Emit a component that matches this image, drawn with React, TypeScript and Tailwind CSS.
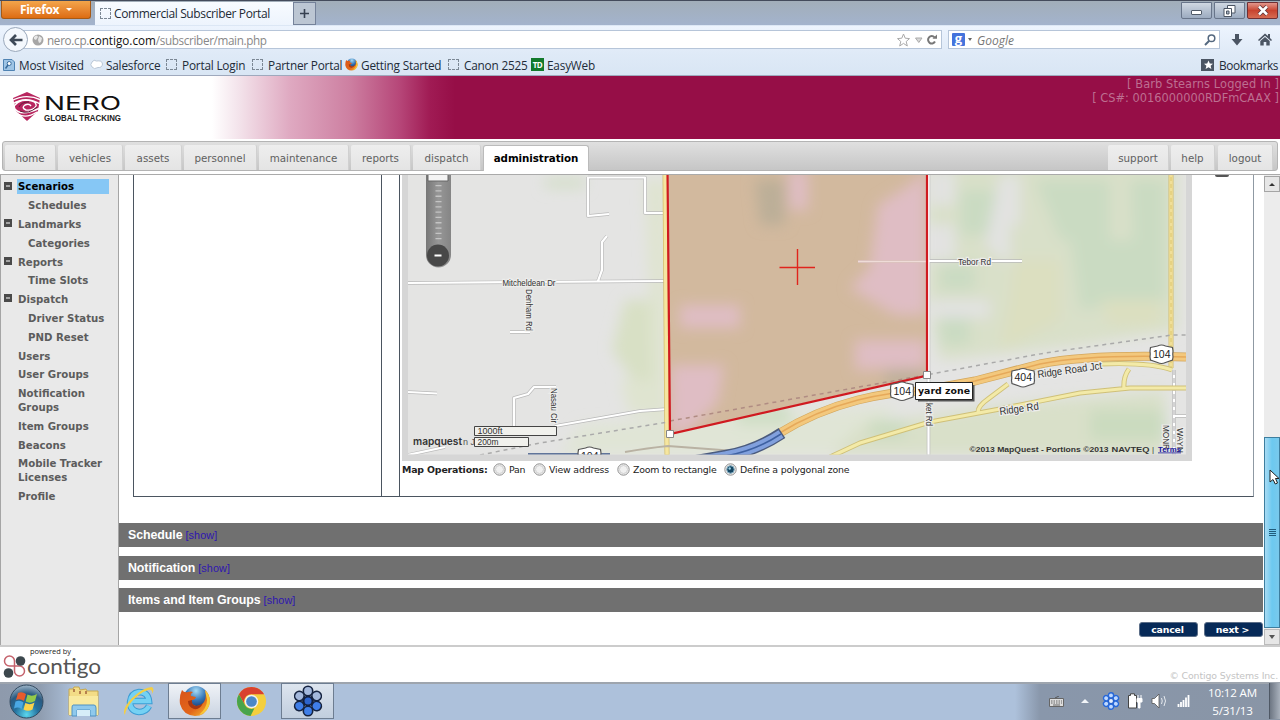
import { ReactNode } from "react";

const SEGOE = "font-['Open_Sans','Noto_Sans',sans-serif]";
const VERDANA = "font-['DejaVu_Sans',sans-serif]";

const leftTabs = [
  { label: "home", box: "ml-[2px] w-[51px]" },
  { label: "vehicles", box: "ml-[2px] w-[65px]" },
  { label: "assets", box: "ml-[2px] w-[57px]" },
  { label: "personnel", box: "ml-[2px] w-[73px]" },
  { label: "maintenance", box: "ml-[2px] w-[90px]" },
  { label: "reports", box: "ml-[2px] w-[60px]" },
  { label: "dispatch", box: "ml-[2px] w-[68px]" },
];

const rightTabs = [
  { label: "support", box: "w-[61px]" },
  { label: "help", box: "ml-[2px] w-[44px]" },
  { label: "logout", box: "ml-[3px] w-[55px]" },
];

const sideItems = [
  { label: "Scenarios", toggle: true, active: true },
  { label: "Schedules", child: true },
  { label: "Landmarks", toggle: true },
  { label: "Categories", child: true },
  { label: "Reports", toggle: true },
  { label: "Time Slots", child: true },
  { label: "Dispatch", toggle: true },
  { label: "Driver Status", child: true },
  { label: "PND Reset", child: true },
  { label: "Users" },
  { label: "User Groups" },
  { label: "Notification Groups" },
  { label: "Item Groups" },
  { label: "Beacons" },
  { label: "Mobile Tracker Licenses" },
  { label: "Profile" },
];

function BlankPage() {
  return <span className="h-[11px] w-[11px] shrink-0 border border-dashed border-[#7b8794]" />;
}

function FirefoxIcon({ size }: { size: number }) {
  return (
    <svg width={size} height={size} viewBox="0 0 32 32" className="shrink-0">
      <defs>
        <radialGradient id="globe" cx="0.5" cy="0.2" r="0.8">
          <stop offset="0" stopColor="#a8dcf5" />
          <stop offset="0.5" stopColor="#3576b8" />
          <stop offset="1" stopColor="#12295c" />
        </radialGradient>
        <linearGradient id="fox" x1="0" y1="0" x2="1" y2="1">
          <stop offset="0" stopColor="#d9541a" />
          <stop offset="0.6" stopColor="#e2661a" />
          <stop offset="1" stopColor="#f9c432" />
        </linearGradient>
      </defs>
      <circle cx="17" cy="13" r="12" fill="url(#globe)" />
      <path
        d="M3 5 Q5 8 9 7 Q12 6 14 7 Q11 9 12 11 L17 12 Q16 15 13 15 Q12 20 17 21 Q22 21 25 17 Q28 12 26 5 Q33 12 30 21 Q26 31 16 31 Q4 30 1 19 Q0 11 3 5Z"
        fill="url(#fox)"
      />
      <path d="M26 5 Q33 12 30 21 Q27 28 20 30 Q28 23 28 15Z" fill="#f8c838" />
      <path d="M13 15 Q12 20 17 21 Q21 21 24 18 Q21 25 15 24 Q9 22 9 16Z" fill="#a83711" />
    </svg>
  );
}

function TabStrip() {
  return (
    <div className="flex h-[25px] shrink-0 border-t border-[#444b5b] bg-gradient-to-b from-[#a2aeb9] to-[#a3b3cd]">
      <div className="ml-px flex h-[18px] w-[90px] items-center justify-center rounded-b-[3px] border border-t-0 border-[#a65a16] bg-gradient-to-b from-[#f3a54a] to-[#dd6c10] text-[12px] font-bold text-white">
        <span className="tracking-[-0.4px]">Firefox</span>
        <span className="ml-[7px] border-x-[3px] border-t-[3px] border-x-transparent border-t-white" />
      </div>
      <div className="ml-[4px] mt-px flex w-[198px] items-center bg-gradient-to-b from-[#f8fbff] to-[#edf4fd] pl-[5px] text-[#222a35]">
        <BlankPage />
        <span className="ml-[3px] whitespace-nowrap pt-px text-[12px] tracking-[-0.37px]">Commercial Subscriber Portal</span>
      </div>
      <div className="mt-px flex w-[23px] items-center justify-center border border-[#75829a] bg-[#bcc6d3]">
        <svg width="9" height="9" viewBox="0 0 9 9">
          <path d="M4.5 0V9M0 4.5H9" stroke="#374151" strokeWidth="1.6" />
        </svg>
      </div>
      <div className="ml-auto mr-[2px] mt-px flex h-[17px] gap-[2px]">
        <div className="flex w-[31px] items-center justify-center rounded-b-[2px] border border-[#68758a] bg-gradient-to-b from-[#d0d8e2] to-[#9cabc0]">
          <span className="mt-[4px] h-[5px] w-[11px] rounded-[1px] border border-[#505a68] bg-white" />
        </div>
        <div className="flex w-[31px] items-center justify-center rounded-b-[2px] border border-[#68758a] bg-gradient-to-b from-[#d0d8e2] to-[#9cabc0]">
          <svg width="13" height="12" viewBox="0 0 13 12">
            <path d="M4.5 .5H12V8H4.5Z" fill="#fff" stroke="#4b5563" />
            <path d="M1 3.5H8.5V11.5H1Z" fill="#fff" stroke="#4b5563" />
            <path d="M3.5 6H6V9H3.5Z" fill="#a9b5c5" stroke="#4b5563" />
          </svg>
        </div>
        <div className="flex w-[31px] items-center justify-center rounded-b-[2px] border border-[#702f33] bg-gradient-to-b from-[#e2958b] via-[#c8432f] to-[#d66a51]">
          <svg width="12" height="11" viewBox="0 0 12 11">
            <path d="M2 1.5L10 9.5M10 1.5L2 9.5" stroke="#5d3238" strokeWidth="4" />
            <path d="M2 1.5L10 9.5M10 1.5L2 9.5" stroke="#fff" strokeWidth="2.5" />
          </svg>
        </div>
      </div>
    </div>
  );
}

function NavBar() {
  return (
    <div className="flex h-[28px] shrink-0 items-center border-t border-[#dce7f5] bg-gradient-to-b from-[#edf4fe] to-[#dfeaf7]">
      <div className="z-10 ml-[3px] mr-[-13px] flex h-[25px] w-[25px] shrink-0 items-center justify-center rounded-full border border-[#9aa8bb] bg-[#f4f8fd]">
        <svg width="14" height="12" viewBox="0 0 14 12">
          <path d="M7 1L2 6L7 11M2.5 6H13.5" fill="none" stroke="#3f4a58" strokeWidth="2.7" />
        </svg>
      </div>
      <div className="flex h-[19px] w-[927px] items-center border border-[#b6c5d9] bg-white pl-[16px] text-[12px] text-[#888]">
        <svg width="12" height="12" viewBox="0 0 12 12">
          <circle cx="6" cy="6" r="5.5" fill="#a6a6a6" />
          <path d="M2 3Q5 0 6 3L4 6L2 5ZM7 2L10 4L9 8L7 9L6 6Z" fill="#e7e7e7" />
        </svg>
        <span className="ml-[3px] whitespace-nowrap pt-[2px] text-[11.7px]">
          <span className="tracking-[-0.3px]">nero.cp.</span>
          <span className="tracking-[0] text-[#111]">contigo.com</span>
          <span className="tracking-[-0.35px]">/subscriber/main.php</span>
        </span>
        <svg className="ml-auto mr-[2px]" width="44" height="14" viewBox="0 0 44 14">
          <path
            d="M7 1L8.7 5.2L13 5.6L9.7 8.5L10.8 13L7 10.4L3.2 13L4.3 8.5L1 5.6L5.3 5.2Z"
            transform="translate(1.5 0)"
            fill="#fff"
            stroke="#aaa"
          />
          <path d="M20.5 5H27L23.8 9.5Z" fill="#d8d8d8" stroke="#aaa" />
          <path d="M39.5 4.3A3.7 3.7 0 1 0 40 8.6" fill="none" stroke="#777" strokeWidth="2" />
          <path d="M37.5 5.8H42V1.5Z" fill="#777" />
        </svg>
      </div>
      <div className="ml-[6px] flex h-[19px] w-[272px] items-center border border-[#b6c5d9] bg-white pl-[3px]">
        <span className="flex h-[13px] w-[13px] items-center justify-center rounded-[1px] bg-[#4473dc] text-[13px] font-bold leading-none text-white">
          <span className="-mt-[3px]">g</span>
        </span>
        <span className="ml-[3px] border-x-[2.5px] border-t-[3px] border-x-transparent border-t-[#666]" />
        <span className="ml-[5px] pt-[2px] text-[12px] italic text-[#777]">Google</span>
        <svg className="ml-auto mr-[3px]" width="12" height="12" viewBox="0 0 12 12">
          <circle cx="7.5" cy="4.3" r="3.3" fill="none" stroke="#54687f" strokeWidth="1.5" />
          <path d="M5 7L1 11" stroke="#54687f" strokeWidth="2" />
        </svg>
      </div>
      <svg className="ml-[11px]" width="12" height="12" viewBox="0 0 12 12">
        <path d="M4 0H8V5H11.5L6 11.5L.5 5H4Z" fill="#4b5563" />
      </svg>
      <svg className="ml-[15px]" width="14" height="13" viewBox="0 0 14 13">
        <path d="M0 7L7 .5L10 3V1H12V5L14 7L13 8L7 2.7L1 8Z" fill="#4b5563" />
        <path d="M2.3 8L7 4L11.7 8V12.5H8.3V9H5.7V12.5H2.3Z" fill="#4b5563" />
      </svg>
    </div>
  );
}

function Bookmark({ icon, label, box }: { icon: ReactNode; label: string; box: string }) {
  return (
    <div className={`flex shrink-0 items-center whitespace-nowrap ${box}`}>
      <span className="flex w-[16px] shrink-0">{icon}</span>
      <span className="pt-[2px]">{label}</span>
    </div>
  );
}

function BookmarksBar() {
  return (
    <div className="flex h-[23px] shrink-0 items-center border-b border-[#9fa9bd] bg-gradient-to-b from-[#dfeaf7] to-[#d9e6f4] pl-[3px] pt-px text-[11.8px] tracking-[-0.2px] text-[#222b38]">
      <Bookmark
        box="w-[87px]"
        label="Most Visited"
        icon={
          <svg width="12" height="13" viewBox="0 0 12 13">
            <path d="M.5 1.5H9L11.5 4V12.5H.5Z" fill="#9ec4e5" stroke="#4f83b3" />
            <circle cx="6.2" cy="5.5" r="2" fill="#fff" stroke="#386b9c" />
            <path d="M5 7L2.5 10.5" stroke="#386b9c" strokeWidth="1.5" />
          </svg>
        }
      />
      <Bookmark
        box="w-[76px]"
        label="Salesforce"
        icon={
          <svg width="13" height="11" viewBox="0 0 13 11">
            <path d="M2 3Q4 0 6.5 2Q12 1 12.5 5Q12 9 8 8.5Q4 11 2 8Q-.5 6 2 3Z" fill="#fff" stroke="#b8c6d6" />
          </svg>
        }
      />
      <Bookmark box="w-[86px]" label="Portal Login" icon={<BlankPage />} />
      <Bookmark box="w-[93px]" label="Partner Portal" icon={<BlankPage />} />
      <Bookmark box="w-[103px]" label="Getting Started" icon={<FirefoxIcon size={13} />} />
      <Bookmark box="w-[83px]" label="Canon 2525" icon={<BlankPage />} />
      <Bookmark
        box="w-[80px]"
        label="EasyWeb"
        icon={
          <span className="flex h-[13px] w-[13px] items-center justify-center bg-[#127a2c] text-[8px] font-bold tracking-[-0.5px] text-white">
            TD
          </span>
        }
      />
      <div className="ml-auto mr-[2px] flex items-center whitespace-nowrap">
        <svg className="mr-[5px]" width="13" height="12" viewBox="0 0 13 12">
          <path d="M0 0H13V12H0Z" fill="#4b5563" />
          <path d="M7.5 1.5L8.8 4.5L12 4.8L9.6 6.8L10.4 10L7.5 8.3L4.6 10L5.4 6.8L3 4.8L6.2 4.5Z" fill="#fff" />
        </svg>
        <span className="pt-[2px] tracking-[-0.35px]">Bookmarks</span>
      </div>
    </div>
  );
}

function NeroLogo() {
  return (
    <div className="flex items-start pl-[12px] pt-[16px]">
      <svg width="30" height="30" viewBox="0 0 30 30">
        <path d="M1 6L15 0L28 6L26 19L15 29L4 19Z" fill="#b8265f" />
        <path
          d="M0 8.5Q14 1 29 8M0 12.5Q13 3 29 12.5M1 17Q4 8 15 8Q25 9 24 14Q21 19 14 18Q9 16 13 13Q17 11 19 14M3 17Q9 25 28 16M6 22Q14 27 25 20"
          fill="none"
          stroke="#fff"
          strokeWidth="1.4"
        />
        <path d="M7 15Q9 10 17 10M8 19Q16 23 25 15" fill="none" stroke="#5f1d3a" />
      </svg>
      <svg width="84" height="36" viewBox="0 0 84 36" className="ml-[1px] overflow-visible">
        <text x="1" y="17.5" fontFamily="Inter, sans-serif" fontSize="19" fill="#111" textLength="77" lengthAdjust="spacingAndGlyphs">
          NERO
        </text>
        <text
          x="1"
          y="28.5"
          fontFamily="Liberation Sans, sans-serif"
          fontSize="8.6"
          fontWeight="bold"
          fill="#222"
          textLength="77"
          lengthAdjust="spacingAndGlyphs"
        >
          GLOBAL TRACKING
        </text>
      </svg>
    </div>
  );
}

function Header() {
  return (
    <div
      className={`flex h-[63px] shrink-0 justify-between bg-[linear-gradient(90deg,#fff_0,#fff_212px,#f3e2ea_240px,#dfa9c1_290px,#cd7fa1_350px,#b64678_400px,#a01b54_430px,#960e47_455px)] ${VERDANA}`}
    >
      <NeroLogo />
      <div className="pr-[1px] pt-px text-right text-[11.4px] leading-[14px] text-[#bd6f91]">
        <p className="tracking-[0.1px]">[ Barb Stearns Logged In ]</p>
        <p>[ CS#: 0016000000RDFmCAAX ]</p>
      </div>
    </div>
  );
}

function MenuBar() {
  const tab =
    "flex items-center justify-center bg-gradient-to-b from-[#eee] to-[#e4e4e4] border-r border-[#d0d0d0] rounded-t-[2px] pt-[3px]";
  return (
    <div className="h-[36px] shrink-0 border-b border-[#aaa] bg-white pt-[2px]">
      <div
        className={`ml-[2px] flex h-[30px] w-[1276px] rounded-[3px] border border-[#b4b4b4] bg-gradient-to-b from-[#e0e0e0] to-[#c6c6c6] pt-[3px] text-[10.3px] text-[#606060] ${VERDANA}`}
      >
        {leftTabs.map((t) => (
          <div key={t.label} className={`${tab} ${t.box}`}>
            {t.label}
          </div>
        ))}
        <div className="ml-[2px] mb-[-1px] flex w-[106px] items-center justify-center rounded-t-[3px] border border-b-0 border-[#bbb] bg-white pt-px font-bold text-black">
          <span className="tracking-[-0.05px]">administration</span>
        </div>
        <div className="ml-auto mr-[4px] flex">
          {rightTabs.map((t) => (
            <div key={t.label} className={`${tab} ${t.box}`}>
              {t.label}
            </div>
          ))}
        </div>
      </div>
    </div>
  );
}

function Sidebar() {
  return (
    <div
      className={`w-[119px] shrink-0 border-l border-r border-[#a5a5a5] bg-[#e9e9e9] pt-[3px] text-[10.2px] font-bold leading-[13.8px] text-[#5c5c5c] ${VERDANA}`}
    >
      {sideItems.map((item) => (
        <div key={item.label} className="flex py-[2.5px] pl-[3px]">
          <span className="w-[13px] shrink-0 pt-px">
            {item.toggle && (
              <svg width="8" height="8" viewBox="0 0 8 8" className="block">
                <path d="M0 0H8V8H0Z" fill="#4a4a4a" />
                <path d="M2 4H6" stroke="#fff" />
              </svg>
            )}
          </span>
          <span
            className={
              item.active
                ? "-mt-[2px] w-[92px] bg-[#86c7f5] pb-px pl-[1px] pt-px text-black"
                : item.child
                  ? "whitespace-nowrap pl-[11px]"
                  : "w-[92px] pl-[1px]"
            }
          >
            {item.label}
          </span>
        </div>
      ))}
    </div>
  );
}

function Shield({ x, y, label }: { x: number; y: number; label: string }) {
  return (
    <g transform={`translate(${x} ${y})`}>
      <path
        d="M-11 -6.5L-4 -8Q0 -10 4 -8L11 -6.5L11.5 -3Q11 0 11.5 3L11 6L4 8.5Q0 10.5 -4 8.5L-11 6L-11.5 3Q-11 0 -11.5 -3Z"
        fill="#fff"
        stroke="#555"
        strokeWidth="1.2"
      />
      <text x="-8.5" y="3.8" fontSize="10.5" textLength="17.5" lengthAdjust="spacingAndGlyphs" fill="#222">
        {label}
      </text>
    </g>
  );
}

const halo = {
  stroke: "#ededeb",
  strokeWidth: 2.5,
  paintOrder: "stroke" as const,
  lengthAdjust: "spacingAndGlyphs" as const,
};

// drawn in page units, so the viewBox starts where the map panel does
function MapView() {
  return (
    <svg width="790" height="286" viewBox="402 175 790 286" className="block" fontFamily="Liberation Sans, Arial, sans-serif">
      <defs>
        <filter id="soft" x="-30%" y="-30%" width="160%" height="160%">
          <feGaussianBlur stdDeviation="7" />
        </filter>
        <clipPath id="tile">
          <path d="M408 175H1186V454.5H408Z" />
        </clipPath>
        <clipPath id="zone">
          <path d="M667 170L670 434L926 375V170Z" />
        </clipPath>
        <linearGradient id="slider" x1="0" x2="1">
          <stop offset="0" stopColor="#777" />
          <stop offset="0.5" stopColor="#979797" />
          <stop offset="1" stopColor="#858585" />
        </linearGradient>
      </defs>
      <path d="M402 175H1192V461H402Z" fill="#d6d6d6" />
      <g clipPath="url(#tile)">
        <path d="M408 175H1186V455H408Z" fill="#e4e4e3" />
        <g filter="url(#soft)">
          <path d="M927 160H1178V330L1080 345L1020 352L940 360L927 300Z" fill="#d9e0c9" />
          <path d="M960 190H995V235H960ZM1035 180H1110V240H1060ZM1070 240H1150V300L1080 310ZM940 265H975V290H940ZM1130 180H1165V300H1135ZM940 318H970V345H940Z" fill="#cadbc2" />
          <path d="M1015 260H1060V320L1000 350L1010 300ZM1100 300H1160V325H1110Z" fill="#dcdfc0" />
          <path d="M930 170H955V205H930ZM1000 175H1020V225H1010V265L985 245ZM927 225H955V260H927ZM930 300H990V318H930Z" fill="#e2e2e1" />
          <path d="M625 300H665V405L640 390L612 350Z" fill="#d8e0c5" />
          <path d="M645 180H667V440H655ZM620 380H660V415H630Z" fill="#dfe4d0" />
          <path d="M545 178H585V188H545Z" fill="#d3dec7" />
          <path d="M580 425L900 405L840 455H560Z" fill="#e0e5d6" />
          <path d="M730 405H790V425H740Z" fill="#cfdec5" />
          <path d="M860 425L1000 405L1165 390V455H830Z" fill="#d9e0c9" />
          <path d="M1090 410H1165V440H1090ZM870 420H905V438H870Z" fill="#cbdbbf" />
        </g>
        <g fill="none" strokeLinejoin="round">
          <g stroke="#b9b9b9" strokeWidth="3.5">
            <path d="M408 283L666 281M588 177.500H645V213H666M588 177V216L609 214M598 281L602 270V242L607 236M510 332H530M408 392L437 393.500M514 430V398L528 394L534 387H556M555 426L640 411L668 409M408 455L445 447" />
            <path d="M928.500 175V455M928 261H1022M1174 416H1186M1174 370V455" />
          </g>
          <g stroke="#fff" strokeWidth="2.2">
            <path d="M408 283L666 281M588 177.500H645V213H666M588 177V216L609 214M598 281L602 270V242L607 236M510 332H530M408 392L437 393.500M514 430V398L528 394L534 387H556M555 426L640 411L668 409M408 455L445 447" />
            <path d="M928.500 175V455M928 261H1022M1174 416H1186M1174 370V455" />
          </g>
          <path d="M1174 370V455" stroke="#a9a9a9" strokeDasharray="5 3" />
          <path d="M1171 170V368" stroke="#d2be72" strokeWidth="5" />
          <path d="M1171 170V368" stroke="#f0df98" strokeWidth="3.5" />
          <path d="M1171 170V368" stroke="#dcc66d" strokeDasharray="4 3" />
          <path d="M665 170L667 455" stroke="#d4bd6d" strokeWidth="5" />
          <path d="M665 170L667 455" stroke="#f5e6a0" strokeWidth="3.5" />
          <g stroke="#cfc078" strokeWidth="5">
            <path d="M830 457L860 443L930 422L1000 409L1080 393L1130 388H1186M978 412Q978 406 988 399L1008 384M1124 389Q1123 377 1129 369M1100 364Q1150 362 1172 370" />
          </g>
          <g stroke="#f3eaa8" strokeWidth="3.2">
            <path d="M830 457L860 443L930 422L1000 409L1080 393L1130 388H1186M978 412Q978 406 988 399L1008 384M1124 389Q1123 377 1129 369M1100 364Q1150 362 1172 370" />
          </g>
          <path d="M778 434Q815 411 858 400Q890 392 920 391L975 381L1040 364Q1090 354 1186 357" stroke="#d3a75d" strokeWidth="9" />
          <path d="M778 434Q815 411 858 400Q890 392 920 391L975 381L1040 364Q1090 354 1186 357" stroke="#f3c87d" strokeWidth="7.5" />
          <path d="M778 434Q815 411 858 400Q890 392 920 391L975 381L1040 364Q1090 354 1186 357" stroke="#e6a95a" strokeWidth="1.5" />
          <path d="M625 452Q648 448 668 446L735 451" stroke="#b9b2a3" strokeWidth="2" />
          <path d="M782 433Q755 451 725 456L690 462" stroke="#4b5b7e" strokeWidth="12" />
          <path d="M781 434Q755 451 725 456L690 462" stroke="#81a0dd" strokeWidth="9" />
          <path d="M781 434Q755 451 725 456L690 462" stroke="#3e61a2" strokeWidth="1.5" />
          <path d="M528 454H610" stroke="#60749a" strokeWidth="2" />
          <path d="M480 455L540 443L668 422L926 375L1045 353L1172 335H1186" stroke="#aaa" strokeWidth="1.5" strokeDasharray="4 4" />
        </g>
        <g clipPath="url(#zone)">
          <path d="M667 170L670 434L926 375V170Z" fill="#d2b99e" />
          <g filter="url(#soft)">
            <path d="M680 305H740V328H680ZM671 365H724L718 402L690 430L670 435ZM878 205L910 185L926 170V315H895L850 288L870 268ZM855 340H926V368L855 370ZM788 170H808V210H790Z" fill="#dfbdc4" />
            <path d="M755 180H785V225H760ZM885 370H926V385H885Z" fill="#bcaf98" />
          </g>
          <path d="M670 421L926 375" stroke="#b08c83" strokeWidth="1.5" strokeDasharray="4 4" />
          <path d="M858 261.500H926" stroke="#c9a9a4" strokeWidth="3" />
          <path d="M858 261.500H926" stroke="#efdcd8" strokeWidth="1.8" />
        </g>
        <path d="M667.5 170L670 434L927 375.5V170" fill="none" stroke="#d01a20" strokeWidth="2.2" />
        <path d="M779.5 267.5H815M797.5 249V285" fill="none" stroke="#e0241c" strokeWidth="1.4" />
        <path d="M666.5 430.5H673.5V437.5H666.5ZM923.5 371.5H930.5V378.5H923.5Z" fill="#fff" stroke="#888" />

        <g fontSize="9" fill="#333">
          <text x="502.5" y="285.5" textLength="53" {...halo}>Mitcheldean Dr</text>
          <text transform="translate(526 289) rotate(90)" textLength="42" {...halo}>Denham Rd</text>
          <text transform="translate(551 388) rotate(90)" textLength="35" {...halo}>Nasau Cir</text>
          <text x="958" y="265" textLength="33" {...halo}>Tebor Rd</text>
          <text transform="translate(926 403) rotate(90)" textLength="23" {...halo}>ket Rd</text>
          <text transform="translate(1163 425) rotate(90)" textLength="25" {...halo}>MONR</text>
          <text transform="translate(1177 428) rotate(90)" textLength="25" {...halo}>WAYN</text>
        </g>
        <g fontSize="10.5" fill="#333">
          <text transform="translate(1038 378) rotate(-8)" textLength="65" {...halo}>Ridge Road Jct</text>
          <text transform="translate(1000 415) rotate(-8)" textLength="39.5" {...halo}>Ridge Rd</text>
        </g>
        <Shield x={589.5} y={456} label="104" />
        <Shield x={902} y={391} label="104" />
        <Shield x={1023} y={377.5} label="404" />
        <Shield x={1161.5} y={354} label="104" />

        <path d="M426 170H451V255A12.5 12.5 0 0 1 426 255Z" fill="url(#slider)" />
        <path d="M428 174H448V181H428Z" fill="#f4f4f4" stroke="#666" />
        <path d="M438.5 185V240" stroke="#c4c4c4" strokeWidth="6" strokeDasharray="1.3 4" />
        <circle cx="438" cy="255.5" r="11" fill="#484848" />
        <path d="M434.5 255.5H441.5" stroke="#fff" strokeWidth="1.8" />

        <text x="413" y="445" fontFamily="Inter, sans-serif" fontSize="10.5" fontWeight="600" fill="#333" textLength="49" lengthAdjust="spacingAndGlyphs">mapquest</text>
        <text x="463" y="445" fontSize="9" fill="#555">n J</text>
        <path d="M474.5 426.5H556.5V435.5H474.500ZM474.5 437.5H528.5V446.5H474.5Z" fill="#f1f1ed" stroke="#444" />
        <text x="477.5" y="434.3" fontSize="9.3" fill="#333" textLength="25" lengthAdjust="spacingAndGlyphs">1000ft</text>
        <text x="477.5" y="445.3" fontSize="9.3" fill="#333" textLength="21" lengthAdjust="spacingAndGlyphs">200m</text>

        <g fontFamily="Liberation Sans, sans-serif" fontSize="8" fontWeight="bold" fill="#333">
          <text x="969.5" y="451.5" textLength="139" lengthAdjust="spacingAndGlyphs">©2013 MapQuest  -  Portions ©2013</text>
          <text x="1111.5" y="451.5" textLength="38" lengthAdjust="spacingAndGlyphs">NAVTEQ</text>
          <text x="1152" y="451.5" fontWeight="normal">|</text>
          <text x="1158" y="451.5" textLength="23" lengthAdjust="spacingAndGlyphs" fill="#1b189c" textDecoration="underline">Terms</text>
        </g>
      </g>
      <path d="M918 385H974.5V401.5H918Z" fill="#555" />
      <path d="M915.5 382.5H972.5V399.5H915.5Z" fill="#fff" stroke="#222" />
      <text x="918" y="393.5" fontFamily="DejaVu Sans, sans-serif" fontSize="9.5" fontWeight="bold" fill="#111" textLength="52" lengthAdjust="spacingAndGlyphs">
        yard zone
      </text>
    </svg>
  );
}

function Radio({ label, box, checked }: { label: string; box: string; checked?: boolean }) {
  return (
    <label className={`flex shrink-0 items-center whitespace-nowrap ${box}`}>
      <svg width="13" height="13" viewBox="0 0 13 13" className="mr-[3px] shrink-0">
        <circle cx="6.5" cy="6.5" r="5.7" fill="#f0f0f0" stroke="#909090" />
        <circle cx="6.5" cy="6.5" r="4" fill="none" stroke="#d0d0d0" />
        {checked && <circle cx="6.5" cy="6.5" r="3.7" fill="#174763" stroke="#7ba9c0" />}
        {checked && <circle cx="5.7" cy="5.5" r="1.2" fill="#9ed3e8" />}
      </svg>
      {label}
    </label>
  );
}

function Section({ title, gap }: { title: string; gap: string }) {
  return (
    <div className={`flex h-[24px] items-center bg-[#707070] pl-[9px] font-['Liberation_Sans',Arial,sans-serif] ${gap}`}>
      <span className="text-[12.4px] font-bold tracking-[-0.08px] text-white">{title}</span>
      <span className="ml-[3px] pt-px text-[10.8px] tracking-[0.1px] text-[#2e16b0]">[show]</span>
    </div>
  );
}

function Content() {
  const button =
    "flex h-[15px] w-[59px] items-center justify-center rounded-[3px] border border-[#5c6e88] bg-[#072a58] pt-px";
  return (
    <div className="flex w-[1144px] shrink-0 flex-col">
      <div className="ml-[14px] flex h-[322px] w-[1121px]">
        <div className="w-[249px] border-b border-l border-r border-[#4b5560]" />
        <div className="w-[17px] border-b border-[#4b5560]" />
        <div className="flex w-[855px] border-b border-l border-r border-b-[#4b5560] border-l-[#4b5560] border-r-[#8f99a3]">
          <div className="ml-[2px] w-[790px]">
            <MapView />
            <div className={`flex h-[18px] items-center text-[9.4px] tracking-[-0.18px] text-[#222] ${VERDANA}`}>
              <span className="w-[91px] font-bold tracking-[-0.15px]">Map Operations:</span>
              <Radio box="w-[40px]" label="Pan" />
              <Radio box="w-[84px]" label="View address" />
              <Radio box="w-[107px]" label="Zoom to rectangle" />
              <Radio box="w-[130px]" label="Define a polygonal zone" checked />
            </div>
          </div>
          <div className="ml-[23px] h-[2px] w-[14px] rounded-b-[2px] bg-[#555]" />
        </div>
      </div>
      <Section title="Schedule" gap="mt-[26px]" />
      <Section title="Notification" gap="mt-[9px]" />
      <Section title="Items and Item Groups" gap="mt-[8px]" />
      <div className={`mt-[10px] flex justify-end gap-[6px] text-[9.4px] font-bold tracking-[-0.2px] text-white ${VERDANA}`}>
        <button className={`${button} pr-[2px]`}>cancel</button>
        <button className={`${button} pr-[2px]`}>next &gt;</button>
      </div>
    </div>
  );
}

function Scrollbar() {
  return (
    <div className="ml-px flex w-[16px] shrink-0 flex-col bg-[#ececec]">
      <div className="mt-px flex h-[16px] items-center justify-center border border-[#a5a5a5] bg-[#e6e6e6]">
        <span className="border-x-[3px] border-b-[3px] border-x-transparent border-b-[#333]" />
      </div>
      <div className="relative mt-[245px] flex h-[191px] flex-col items-center justify-center gap-px border border-[#3d7e9f] bg-gradient-to-r from-[#a8dbf3] via-[#6cc9f0] to-[#79c9ec]">
        <span className="h-px w-[7px] bg-[#205c7c]" />
        <span className="h-px w-[7px] bg-[#205c7c]" />
        <span className="h-px w-[7px] bg-[#205c7c]" />
        <span className="h-px w-[7px] bg-[#205c7c]" />
        <svg className="absolute left-[4px] top-[31px]" width="12" height="17" viewBox="0 0 12 17">
          <path d="M1 1V13L4 10.5L6.3 15L8.5 14L6.5 9.5H10Z" fill="#fff" stroke="#222" />
        </svg>
      </div>
      <div className="mt-px flex h-[16px] items-center justify-center border border-[#bbb] bg-[#e6e6e6]">
        <span className="border-x-[3px] border-t-[4px] border-x-transparent border-t-[#555]" />
      </div>
    </div>
  );
}

function Footer() {
  return (
    <div className="flex h-[37px] shrink-0 items-end justify-between border-t-2 border-[#ccc] bg-white">
      <svg width="105" height="35" viewBox="0 0 105 35">
        <path
          d="M14.5 19V14A5 5 0 1 0 9.5 19H19.5A5 5 0 1 1 14.5 24Z"
          fill="none"
          stroke="#c5626c"
          strokeWidth="1.5"
        />
        <circle cx="20.5" cy="14" r="4.8" fill="#3c474d" />
        <circle cx="8.5" cy="26" r="4.8" fill="#3c474d" />
        <text x="30" y="7" fontFamily="Open Sans, sans-serif" fontSize="7.5" fill="#222" textLength="41" lengthAdjust="spacingAndGlyphs">
          powered by
        </text>
        <text x="27" y="26.5" fontFamily="Lato, sans-serif" fontSize="21.5" fill="#555" textLength="74" lengthAdjust="spacingAndGlyphs">
          contigo
        </text>
      </svg>
      <span className={`pr-[2px] text-[9.4px] leading-[13px] tracking-[-0.12px] text-[#c4c4c4] ${VERDANA}`}>© Contigo Systems Inc.</span>
    </div>
  );
}

function Flower({ size, dark }: { size: number; dark?: boolean }) {
  return (
    <svg width={size} height={size} viewBox="0 0 32 32">
      {[0, 60, 120, 180, 240, 300].map((a) => (
        <g key={a} transform={`rotate(${a} 16 16)`}>
          <path d="M16 15V9" stroke={dark ? "#111f40" : "#2b5fc0"} strokeWidth="5" />
          <circle
            cx="16"
            cy="6"
            r="4.7"
            fill={!dark ? "#bfd9ff" : a > 60 && a < 300 ? "#3f7ee8" : "#a3b8dc"}
            stroke={dark ? "#152340" : "#2868d8"}
            strokeWidth={dark ? 1.6 : 2.5}
          />
        </g>
      ))}
      <circle cx="16" cy="16" r="3.5" fill={dark ? "#2d64cc" : "#e7f1ff"} />
    </svg>
  );
}

function Taskbar() {
  return (
    <div
      className={`flex h-[38px] shrink-0 items-center border-t-2 border-[#9ea5ae] bg-[linear-gradient(90deg,#8e9aac_0,#8f9db0_40px,#adc1db_75px,#adc1db_1015px,#8997ab_1040px,#8995a6_1280px)] pb-[2px] ${SEGOE}`}
    >
      <svg className="ml-[9px]" width="35" height="35" viewBox="0 0 35 35">
        <defs>
          <radialGradient id="orb" cx="0.5" cy="0.9" r="0.9">
            <stop offset="0" stopColor="#5ad7ee" />
            <stop offset="0.4" stopColor="#25719e" />
            <stop offset="0.7" stopColor="#2b5a80" />
            <stop offset="1" stopColor="#9fb6c9" />
          </radialGradient>
        </defs>
        <circle cx="17.5" cy="17.5" r="16.5" fill="url(#orb)" stroke="#324a60" />
        <path d="M9 9Q13 7 17 10L15 17Q11 14 7 16Z" fill="#e75b2c" />
        <path d="M18.5 10.5Q23 13 28 10L26 17Q21 20 16.7 17.5Z" fill="#93c94a" />
        <path d="M6.5 17.5Q11 15.5 14.5 18.5L12.5 25Q9 22.5 5 24.5Z" fill="#4aa8e4" />
        <path d="M16.3 19Q21 21.5 25.5 18.5L23.5 25.5Q19 28 14.5 25.5Z" fill="#fbd24b" />
      </svg>
      <svg className="ml-[24px]" width="32" height="32" viewBox="0 0 32 32">
        <path d="M1 4H5L6 2H11L12 5L18 4L19 6H30V30H1Z" fill="#f3dc86" stroke="#c6a850" />
        <path d="M1 11H30V30H1Z" fill="#f9ea9f" />
        <path d="M5 20H26Q28 20 28 23V31H22V25H9V31H4V23Q4 20 5 20Z" fill="#8fc9ec" stroke="#4f92c2" />
        <path d="M9 25H22V31H9Z" fill="#d6edf8" />
        <path d="M6 4V7M12 6V9M18 6V9" stroke="#a3623b" strokeWidth="1.5" />
      </svg>
      <svg className="ml-[22px]" width="34" height="34" viewBox="0 0 34 34">
        <path d="M27 22Q24 28 17 28Q8 27 8 18Q9 9 17 8Q26 8 27 17H10" fill="none" stroke="#3b9cd4" strokeWidth="6.5" />
        <path d="M27 22Q24 28 17 28Q8 27 8 18Q9 9 17 8Q26 8 27 17H10" fill="none" stroke="#75d1f3" strokeWidth="4.5" />
        <path d="M3 31Q-1 26 10 14Q22 3 30 3Q33 5 30 10Q31 5 26 6Q16 9 7 21Q3 28 3 31Z" fill="#f3ce45" />
      </svg>
      <div className="ml-[12px] flex h-[36px] w-[53px] items-center justify-center border border-[#6d7d91] bg-gradient-to-b from-[#f0f3f7] to-[#c9d3e1]">
        <FirefoxIcon size={32} />
      </div>
      <svg className="ml-[15px]" width="31" height="31" viewBox="0 0 32 32">
        <circle cx="16" cy="16" r="15" fill="#f4cf3d" />
        <path d="M3 8.5A15 15 0 0 1 29 8.5H16A7.5 7.5 0 0 0 9.5 20Z" fill="#d9412f" />
        <path d="M3 8.5L9.5 20A7.5 7.5 0 0 0 19 23L15 31A15 15 0 0 1 3 8.5Z" fill="#48a44b" />
        <circle cx="16" cy="16" r="7" fill="#f1f1f1" />
        <circle cx="16" cy="16" r="5.5" fill="#4a87c7" />
      </svg>
      <div className="ml-[14px] flex h-[36px] w-[53px] items-center justify-center border border-[#6d7d91] bg-gradient-to-b from-[#dde5ef] to-[#c1cede]">
        <Flower size={32} dark />
      </div>
      <svg className="ml-auto" width="15" height="11" viewBox="0 0 15 11">
        <path d="M6 2L10 0" stroke="#555" />
        <path d="M.5 2.5H14.5V10.5H.5Z" fill="#ddd" stroke="#666" />
        <path d="M2 5H13M2 7H13" stroke="#666" strokeDasharray="1.5 1" />
        <path d="M4 9H11" stroke="#666" />
      </svg>
      <span className="ml-[17px] border-x-[4px] border-b-[4px] border-x-transparent border-b-[#f2f5f8]" />
      <span className="ml-[13px]">
        <Flower size={18} />
      </span>
      <svg className="ml-[7px]" width="16" height="16" viewBox="0 0 16 16">
        <path d="M1.5 2.5H3.5V.8H7.5V2.5H9.5V15H1.5Z" fill="#fff" stroke="#444" />
        <path d="M11 2V5M14 2V5M10 5.5H15V9H13V15H11.5V9H10Z" fill="#fff" stroke="#fff" />
      </svg>
      <svg className="ml-[8px]" width="17" height="16" viewBox="0 0 17 16">
        <path d="M1 5.5H3.5L8 1V15L3.5 10.5H1Z" fill="#fff" stroke="#555" strokeWidth="0.8" />
        <path d="M10.5 5Q12 8 10.5 11M13 3Q16 8 13 13" fill="none" stroke="#e6eaef" />
      </svg>
      <svg className="ml-[9px]" width="13" height="12" viewBox="0 0 13 12">
        <path d="M1.5 12V9M4 12V7M6.5 12V5M9 12V2.5M11.5 12V0" stroke="#fff" strokeWidth="1.8" />
      </svg>
      <div className="ml-[15px] w-[55px] pt-px text-center text-[11.6px] leading-[17.5px] tracking-[-0.15px] text-white">
        <p className="whitespace-nowrap">10:12 AM</p>
        <p>5/31/13</p>
      </div>
      <div className="ml-[9px] h-[36px] w-[11px] shrink-0 border-l border-[#4f5865] bg-gradient-to-r from-[#6e7784] to-[#a9b1bc]" />
    </div>
  );
}

export default function App() {
  return (
    <div className={`flex h-[720px] w-[1280px] flex-col overflow-hidden bg-white ${SEGOE}`}>
      <TabStrip />
      <NavBar />
      <BookmarksBar />
      <Header />
      <MenuBar />
      <div className="flex h-[470px] shrink-0 bg-white">
        <Sidebar />
        <Content />
        <Scrollbar />
      </div>
      <Footer />
      <Taskbar />
    </div>
  );
}
